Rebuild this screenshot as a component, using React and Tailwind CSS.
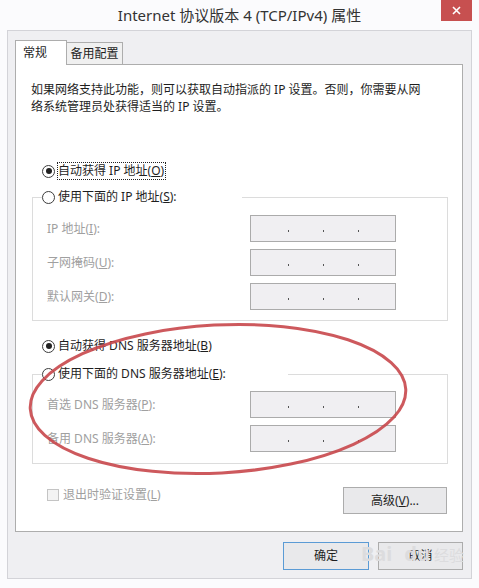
import React from 'react';

const Radio = ({ checked }) => (
    <span className="w-[13px] h-[13px] rounded-full border border-[#3c3c3c] bg-white flex items-center justify-center shrink-0">
        {checked && <span className="w-[6px] h-[6px] rounded-full bg-[#222]" />}
    </span>
);

const IpBox = () => (
    <div className="w-[146px] h-[27px] border border-[#ababab] bg-[#f0eff2] flex items-center">
        <div className="flex items-center pl-[37px] gap-[34px] mt-[4px]">
            <span className="w-[1px] h-[2px] bg-[#555]" />
            <span className="w-[1px] h-[2px] bg-[#555]" />
            <span className="w-[1px] h-[2px] bg-[#555]" />
        </div>
    </div>
);

const Field = ({ label, k, rest }) => (
    <div className="flex items-center h-[27px]">
        <span className="w-[203px] text-[#a0a0a0]">
            {label}(<u>{k}</u>{rest}
        </span>
        <IpBox />
    </div>
);

const App = () => {
    return (
        <div className="relative w-[479px] h-[588px] overflow-hidden bg-[#fbfbfd] flex flex-col px-[7px] pb-[9px] text-[12px] text-[#1e1e1e] font-['Noto_Sans','Noto_Sans_CJK_SC',sans-serif]">
            {/* title bar */}
            <div className="h-[30px] grid grid-cols-[1fr_auto_1fr] items-start shrink-0">
                <div />
                <div className="text-[15px] leading-[30px] text-[#333]">Internet 协议版本 4 (TCP/IPv4) 属性</div>
                <div className="justify-self-end w-[31px] h-[21px] bg-[#c75050] flex items-center justify-center">
                    <svg width="9" height="9" viewBox="0 0 9 9">
                        <path d="M1 1 L8 8 M8 1 L1 8" stroke="#fff" strokeWidth="1.6" />
                    </svg>
                </div>
            </div>

            {/* client area */}
            <div className="flex-1 border border-[#d3d3d8] bg-[#efeff2] pt-[9px] pl-[7px] pr-[8px] flex flex-col">
                <div className="flex items-start h-[25px] -mb-px shrink-0">
                    <div className="relative z-10 w-[52px] h-[25px] border border-b-0 border-[#adadad] bg-white pl-[7px] leading-[23px]">常规</div>
                    <div className="mt-[2px] w-[56px] h-[23px] border border-l-0 border-[#adadad] bg-[#f0f0f0] text-center leading-[21px]">备用配置</div>
                </div>

                {/* tab panel */}
                <div className="flex-1 border border-[#adadad] bg-white flex flex-col">
                    <p className="pl-[15px] pt-[16px] leading-[17px] whitespace-nowrap">
                        如果网络支持此功能，则可以获取自动指派的 IP 设置。否则，你需要从网<br />
                        络系统管理员处获得适当的 IP 设置。
                    </p>

                    <div className="mt-[47px] ml-[26px] h-[18px] flex items-center">
                        <Radio checked />
                        <span className="ml-[2px] h-[18px] border border-dotted border-[#222] pr-[1px] leading-[16px]">
                            自动获得 IP 地址(<u>O</u>)
                        </span>
                    </div>

                    <fieldset className="mt-[8px] ml-[16px] w-[416px] border border-[#dcdcdc]">
                        <legend className="ml-[9px] w-[200px] h-[18px] flex items-center gap-[3px]">
                            <Radio />
                            <span>使用下面的 IP 地址(<u>S</u>):</span>
                        </legend>
                        <div className="pl-[14px] pt-[9px] pb-[10px] flex flex-col gap-[7px]">
                            <Field label="IP 地址" k="I" rest="):" />
                            <Field label="子网掩码" k="U" rest="):" />
                            <Field label="默认网关" k="D" rest="):" />
                        </div>
                    </fieldset>

                    <div className="mt-[16px] ml-[26px] h-[18px] flex items-center gap-[3px]">
                        <Radio checked />
                        <span>自动获得 DNS 服务器地址(<u>B</u>)</span>
                    </div>

                    <fieldset className="mt-[10px] ml-[16px] w-[416px] border border-[#dcdcdc]">
                        <legend className="ml-[9px] w-[246px] h-[18px] flex items-center gap-[3px]">
                            <Radio />
                            <span>使用下面的 DNS 服务器地址(<u>E</u>):</span>
                        </legend>
                        <div className="pl-[14px] pt-[8px] pb-[11px] flex flex-col gap-[7px]">
                            <Field label="首选 DNS 服务器" k="P" rest="):" />
                            <Field label="备用 DNS 服务器" k="A" rest="):" />
                        </div>
                    </fieldset>

                    <div className="mt-[23px] pl-[31px] pr-[15px] flex justify-between items-start">
                        <div className="mt-[1px] h-[13px] flex items-center gap-[4px] text-[#a0a0a0]">
                            <span className="w-[12px] h-[12px] border border-[#c4c4c4] bg-[#f3f3f3]" />
                            <span>退出时验证设置(<u>L</u>)</span>
                        </div>
                        <button className="w-[104px] h-[27px] border border-[#acacac] bg-[#e9e9eb] text-[#1e1e1e]">
                            高级(<u>V</u>)...
                        </button>
                    </div>
                </div>

                <div className="mt-[10px] mb-[8px] h-[28px] flex justify-end gap-[9px] shrink-0">
                    <button className="w-[86px] h-[28px] border border-[#5b9bd5] bg-[#e9e9eb]">确定</button>
                    <button className="w-[85px] h-[28px] border border-[#acacac] bg-[#e9e9eb]">取消</button>
                </div>
            </div>

            {/* watermark */}
            <div className="absolute left-[361px] top-[543px] flex items-end text-[#dcdcde] font-bold pointer-events-none">
                <span className="text-[20px] leading-[22px]">Bai</span>
                <span className="text-[20px] leading-[22px] ml-[12px]">du</span>
                <span className="text-[15px] leading-[20px] ml-[4px] font-normal">经验</span>
            </div>

            {/* red hand-drawn ellipse */}
            <svg className="absolute inset-0 pointer-events-none" width="479" height="588" viewBox="0 0 479 588">
                <ellipse cx="218" cy="399" rx="188" ry="74" transform="rotate(-3 218 399)" fill="none" stroke="#c8474b" strokeWidth="3" strokeOpacity="0.9" />
            </svg>
        </div>
    );
}

export default App;
